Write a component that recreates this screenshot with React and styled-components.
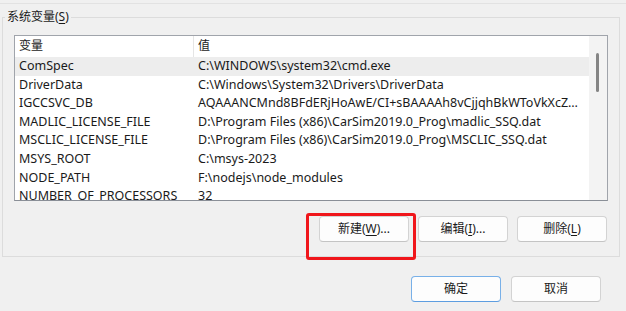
import React from "react";
import styled, { createGlobalStyle } from "styled-components";

const Global = createGlobalStyle`
  html, body { margin: 0; padding: 0; background: #f0f0f0; }
  body {
    font-family: "Noto Sans", "Noto Sans CJK SC", sans-serif;
    font-size: 12px;
    color: #1a1a1a;
  }
`;

const Page = styled.div`
  position: relative;
  width: 626px;
  height: 311px;
  overflow: hidden;
  background: #f0f0f0;
`;

const UpperEdge = styled.div`
  height: 3px;
  border-bottom: 1px solid #e2e2e2;
  margin: 0 0 13px 0;
`;

const Group = styled.div`
  position: relative;
  margin-left: 2px;
  width: 618px;
  height: 240px;
  box-sizing: border-box;
  border: 1px solid #dcdcdc;
  padding: 17px 11px 0 11px;
  display: flex;
  flex-direction: column;
`;

const Legend = styled.div`
  position: absolute;
  left: 2px;
  top: -9px;
  padding: 0 2px;
  background: #f0f0f0;
  line-height: 16px;
  font-size: 12px;
`;

const Key = styled.span`
  text-decoration: underline;
  text-underline-offset: 2px;
`;

const ListBox = styled.div`
  width: 594px;
  height: 166px;
  box-sizing: border-box;
  border: 1px solid #a0a4ab;
  border-bottom-color: #8a8f97;
  background: #fff;
  display: flex;
  overflow: hidden;
`;

const ListContent = styled.div`
  flex: 1;
  min-width: 0;
  display: flex;
  flex-direction: column;
  font-size: 12.5px;
`;

const cols = "179px 1fr";

const HeaderRow = styled.div`
  display: grid;
  grid-template-columns: ${cols};
  height: 21px;
  flex: none;
`;

const HeaderCell = styled.div`
  padding-left: 4px;
  line-height: 20px;
  font-size: 12px;
  border-right: ${(p) => (p.$sep ? "1px solid #e5e5e5" : "none")};
`;

const Row = styled.div`
  display: grid;
  grid-template-columns: ${cols};
  height: 18.6px;
  line-height: 18.6px;
  flex: none;
  background: ${(p) => (p.$focused ? "#ededed" : "transparent")};
`;

const Cell = styled.div`
  padding-left: 4px;
  padding-right: 6px;
  white-space: nowrap;
  overflow: hidden;
  text-overflow: ellipsis;
`;

const ScrollTrack = styled.div`
  width: 18px;
  flex: none;
  background: #f3f3f3;
  position: relative;
`;

const Thumb = styled.div`
  position: absolute;
  left: 7px;
  top: 17px;
  width: 3px;
  height: 39px;
  border-radius: 2px;
  background: #858585;
`;

const ButtonRow = styled.div`
  display: flex;
  justify-content: flex-end;
  gap: 9px;
  margin-top: 15px;
  padding-right: 1px;
`;

const Button = styled.button`
  width: 90px;
  height: 26px;
  box-sizing: border-box;
  border: 1px solid ${(p) => (p.$primary ? "#78b0e8" : "#d3d3d3")};
  border-bottom-color: ${(p) => (p.$primary ? "#5d9de0" : "#c4c4c4")};
  border-radius: 4px;
  background: #fdfdfd;
  font-family: "Noto Sans", "Noto Sans CJK SC", sans-serif;
  font-size: 12px;
  color: #1a1a1a;
  padding: 0;
  line-height: 24px;
`;

const Highlight = styled.div`
  position: absolute;
  left: 303px;
  top: 195px;
  width: 110px;
  height: 47px;
  box-sizing: border-box;
  border: 3px solid #f0161b;
  border-radius: 3px;
  pointer-events: none;
`;

const DialogButtons = styled.div`
  display: flex;
  justify-content: flex-end;
  gap: 10px;
  margin-top: 19px;
  padding-right: 25px;
`;

const rows = [
  ["ComSpec", "C:\\WINDOWS\\system32\\cmd.exe"],
  ["DriverData", "C:\\Windows\\System32\\Drivers\\DriverData"],
  ["IGCCSVC_DB", "AQAAANCMnd8BFdERjHoAwE/CI+sBAAAAh8vCjjqhBkWToVkXcZEkL3GAAAAAAIAAAAAAAAQZgAAAAEAACAAAAB"],
  ["MADLIC_LICENSE_FILE", "D:\\Program Files (x86)\\CarSim2019.0_Prog\\madlic_SSQ.dat"],
  ["MSCLIC_LICENSE_FILE", "D:\\Program Files (x86)\\CarSim2019.0_Prog\\MSCLIC_SSQ.dat"],
  ["MSYS_ROOT", "C:\\msys-2023"],
  ["NODE_PATH", "F:\\nodejs\\node_modules"],
  ["NUMBER_OF_PROCESSORS", "32"],
];

export default function App() {
  return (
    <Page>
      <Global />
      <UpperEdge />
      <Group>
        <Legend>
          系统变量(<Key>S</Key>)
        </Legend>
        <ListBox>
          <ListContent>
            <HeaderRow>
              <HeaderCell $sep>变量</HeaderCell>
              <HeaderCell>值</HeaderCell>
            </HeaderRow>
            {rows.map(([k, v], i) => (
              <Row key={k} $focused={i === 0}>
                <Cell>{k}</Cell>
                <Cell>{v}</Cell>
              </Row>
            ))}
          </ListContent>
          <ScrollTrack>
            <Thumb />
          </ScrollTrack>
        </ListBox>
        <ButtonRow>
          <Button>
            新建(<Key>W</Key>)...
          </Button>
          <Button>
            编辑(<Key>I</Key>)...
          </Button>
          <Button>
            删除(<Key>L</Key>)
          </Button>
        </ButtonRow>
        <Highlight />
      </Group>
      <DialogButtons>
        <Button $primary>确定</Button>
        <Button>取消</Button>
      </DialogButtons>
    </Page>
  );
}
